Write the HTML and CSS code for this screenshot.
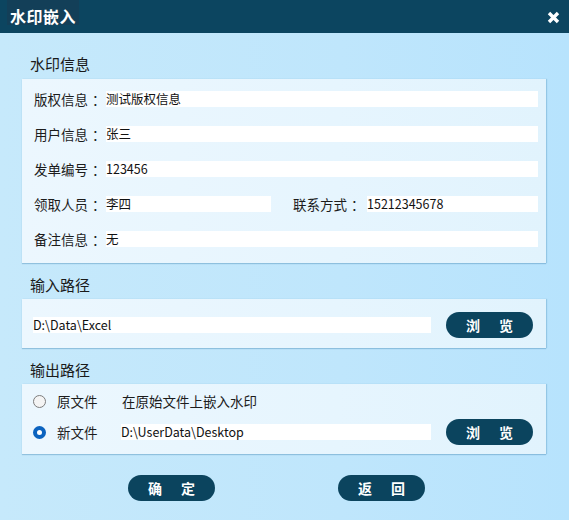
FILE: index.html
```html
<!DOCTYPE html>
<html lang="zh">
<head>
<meta charset="utf-8">
<title>水印嵌入</title>
<link rel="stylesheet" href="styles.css">
</head>
<body>
<div class="dialog">
  <div class="titlebar">
    <div class="title">水印嵌入</div>
    <svg class="close" width="13" height="13" viewBox="0 0 13 13">
      <path d="M2 2 L11 11 M11 2 L2 11" stroke="#fff" stroke-width="3.4" stroke-linecap="butt"/>
    </svg>
  </div>
  <div class="content">
    <div class="section-title first">水印信息</div>
    <div class="panel info">
      <div class="row">
        <span class="label">版权信息<span class="colon">：</span></span><span class="field grow">测试版权信息</span>
      </div>
      <div class="row">
        <span class="label">用户信息<span class="colon">：</span></span><span class="field grow">张三</span>
      </div>
      <div class="row">
        <span class="label">发单编号<span class="colon">：</span></span><span class="field grow">123456</span>
      </div>
      <div class="row">
        <span class="label">领取人员<span class="colon">：</span></span><span class="field short">李四</span>
        <span class="label label2">联系方式<span class="colon">：</span></span><span class="field grow">15212345678</span>
      </div>
      <div class="row">
        <span class="label">备注信息<span class="colon">：</span></span><span class="field grow">无</span>
      </div>
    </div>

    <div class="section-title">输入路径</div>
    <div class="panel path">
      <span class="field grow">D:\Data\Excel</span>
      <button class="btn">浏览</button>
    </div>

    <div class="section-title">输出路径</div>
    <div class="panel output">
      <div class="orow">
        <span class="radio"></span>
        <span class="opt">原文件</span>
        <span class="desc">在原始文件上嵌入水印</span>
      </div>
      <div class="orow">
        <span class="radio checked"></span>
        <span class="opt">新文件</span>
        <span class="field grow">D:\UserData\Desktop</span>
        <button class="btn">浏览</button>
      </div>
    </div>

    <div class="actions">
      <button class="btn">确定</button>
      <button class="btn">返回</button>
    </div>
  </div>
</div>
</body>
</html>
```
FILE: styles.css
```css
* { box-sizing: border-box; }
html, body { margin: 0; padding: 0; }
body {
  width: 569px;
  height: 520px;
  font-family: "Noto Sans CJK SC", "Noto Sans", sans-serif;
  color: #1c1c1c;
  overflow: hidden;
}
.dialog {
  width: 569px;
  height: 520px;
  background: linear-gradient(90deg, #c6e9fb 0%, #bfe6fc 60%, #b7e3fd 100%);
}
.titlebar {
  height: 33px;
  background: #0c4560;
  display: flex;
  align-items: flex-start;
  justify-content: space-between;
}
.title {
  margin-left: 7px;
  height: 25px;
  padding: 5px 3px 0;
  background: #133f58;
  color: #fff;
  font-size: 16px;
  font-weight: bold;
  line-height: 22px;
  letter-spacing: 0.5px;
}
.close {
  margin: 11px 9px 0 0;
}
.content {
  padding: 0 23px 0 22px;
}
.section-title {
  font-size: 15px;
  line-height: 20px;
  height: 20px;
  padding-left: 8px;
  margin: 12px 0 4px;
  color: #1a1a1a;
}
.section-title.first {
  margin-top: 21px;
  margin-bottom: 5px;
}
.panel {
  background: linear-gradient(90deg, #ecf7fe 0%, #e6f5fe 60%, #e1f3fd 100%);
  box-shadow: 0 1px 1px rgba(60, 130, 175, 0.35), 1px 0 1px rgba(60, 130, 175, 0.25);
}
.info {
  padding: 12px 8px 16px 12px;
  display: flex;
  flex-direction: column;
  gap: 19px;
}
.row {
  display: flex;
  align-items: center;
  height: 16px;
}
.label {
  font-size: 13.5px;
  width: 72px;
  flex: none;
  white-space: nowrap;
  color: #1c1c1c;
}
.colon {
  padding-left: 4px;
}
.label2 {
  width: 74px;
  margin-left: 22px;
}
.field {
  height: 16px;
  background: #fff;
  font-size: 12.5px;
  line-height: 16px;
  color: #111;
  white-space: nowrap;
}
.grow { flex: 1; }
.short { width: 165px; flex: none; }
.path {
  display: flex;
  align-items: center;
  padding: 13px 13px 10px 11px;
}
.btn {
  width: 87px;
  height: 26px;
  border: none;
  border-radius: 13px;
  background: #0b445e;
  color: #fff;
  font-family: "Noto Sans CJK SC", sans-serif;
  font-weight: bold;
  font-size: 14px;
  letter-spacing: 19px;
  padding: 0 0 0 19px;
  line-height: 26px;
  flex: none;
  cursor: pointer;
}
.path .btn, .orow .btn { margin-left: 15px; }
.output {
  padding: 4px 13px 9px 11px;
  display: flex;
  flex-direction: column;
  gap: 5px;
}
.orow {
  display: flex;
  align-items: center;
  height: 26px;
}
.radio {
  width: 13px;
  height: 13px;
  border-radius: 50%;
  border: 1px solid #7d7d7d;
  background: #f4f4f4;
  flex: none;
}
.radio.checked {
  border: 4px solid #0b63bf;
  background: #fff;
}
.opt {
  font-size: 13.5px;
  margin-left: 11px;
  width: 64px;
  flex: none;
}
.desc {
  font-size: 13.5px;
  margin-left: 1px;
}
.actions {
  display: flex;
  gap: 123px;
  padding-left: 106px;
  margin-top: 21px;
}
```
